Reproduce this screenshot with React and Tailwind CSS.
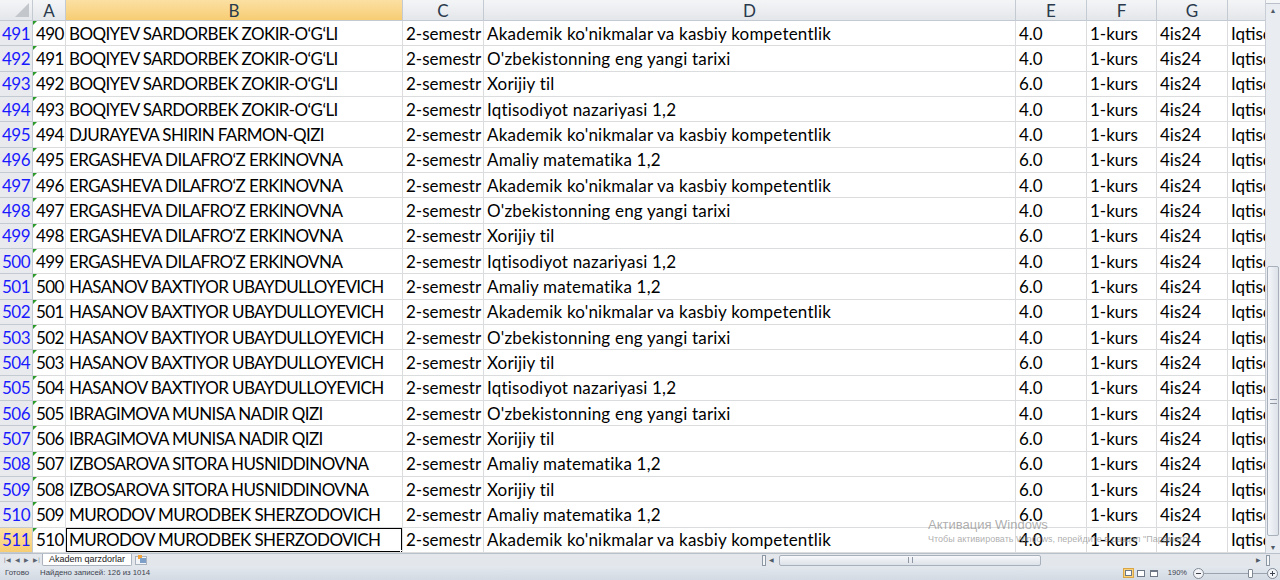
import React from "react";

const AK = "Akademik ko'nikmalar va kasbiy kompetentlik";
const UZ = "O'zbekistonning eng yangi tarixi";
const XT = "Xorijiy til";
const IQ = "Iqtisodiyot nazariyasi 1,2";
const AM = "Amaliy matematika 1,2";

const BOQ = "BOQIYEV SARDORBEK ZOKIR-O‘G‘LI";
const ERG = "ERGASHEVA DILAFRO‘Z ERKINOVNA";
const HAS = "HASANOV BAXTIYOR UBAYDULLOYEVICH";
const IBR = "IBRAGIMOVA MUNISA NADIR QIZI";
const IZB = "IZBOSAROVA SITORA HUSNIDDINOVNA";
const MUR = "MURODOV MURODBEK SHERZODOVICH";

const rows = [
  [BOQ, AK, "4.0"],
  [BOQ, UZ, "4.0"],
  [BOQ, XT, "6.0"],
  [BOQ, IQ, "4.0"],
  ["DJURAYEVA SHIRIN FARMON-QIZI", AK, "4.0"],
  [ERG, AM, "6.0"],
  [ERG, AK, "4.0"],
  [ERG, UZ, "4.0"],
  [ERG, XT, "6.0"],
  [ERG, IQ, "4.0"],
  [HAS, AM, "6.0"],
  [HAS, AK, "4.0"],
  [HAS, UZ, "4.0"],
  [HAS, XT, "6.0"],
  [HAS, IQ, "4.0"],
  [IBR, UZ, "4.0"],
  [IBR, XT, "6.0"],
  [IZB, AM, "6.0"],
  [IZB, XT, "6.0"],
  [MUR, AM, "6.0"],
  [MUR, AK, "4.0"],
];

const cell = "h-full shrink-0 border-r border-b border-[#dadcdd] px-[3px] flex items-center whitespace-nowrap overflow-hidden";
const hdr = "h-full shrink-0 border-r border-b border-[#c4cad2] flex items-center justify-center text-[#2a3a4c]";

function HeaderRow() {
  return (
    <div className="flex h-[21px] bg-gradient-to-b from-[#f4f5f7] to-[#e3e6ea]">
      <div className="relative w-[33px] h-full shrink-0 border-r border-b border-[#c4cad2]">
        <div className="absolute right-[3px] bottom-[3px] w-0 h-0 border-l-[14px] border-l-transparent border-b-[14px] border-b-[#c3c6cb]" />
      </div>
      <div className={hdr + " w-[33px]"}>A</div>
      <div className={hdr + " w-[337px] bg-gradient-to-b from-[#fbe0a3] to-[#f7cd73]"}>B</div>
      <div className={hdr + " w-[81px]"}>C</div>
      <div className={hdr + " w-[532px]"}>D</div>
      <div className={hdr + " w-[71px]"}>E</div>
      <div className={hdr + " w-[70px]"}>F</div>
      <div className={hdr + " w-[71px]"}>G</div>
      <div className={hdr + " flex-1 border-r-0"}></div>
    </div>
  );
}

function Row({ r, i }) {
  const num = 491 + i;
  const selected = num === 511;
  return (
    <div className="flex h-[25.33px]">
      <div
        className={
          "w-[33px] h-full shrink-0 border-r border-b border-[#c4cad2] flex items-center justify-center text-[#1a1aff] tracking-[-0.5px] " +
          (selected ? "bg-gradient-to-b from-[#fbe0a3] to-[#f7cd73]" : "bg-[#e8eaed]")
        }
      >
        {num}
      </div>
      <div className={cell + " w-[33px] relative tracking-[-0.6px]"}>
        <span className="absolute left-0 top-0 w-0 h-0 border-t-[4px] border-t-[#2a9a2a] border-r-[4px] border-r-transparent" />
        {num - 1}
      </div>
      <div className={cell + " w-[337px] relative tracking-[-0.6px]"}>
        {r[0]}
        {selected && (
          <>
            <div className="absolute -left-[1px] -top-[1px] -right-[1px] -bottom-[1px] border-2 border-black" />
            <div className="absolute -right-[3px] -bottom-[3px] w-[5px] h-[5px] bg-black border border-white" />
          </>
        )}
      </div>
      <div className={cell + " w-[81px]"}>2-semestr</div>
      <div className={cell + " w-[532px] tracking-[0.2px]"}>{r[1]}</div>
      <div className={cell + " w-[71px]"}>{r[2]}</div>
      <div className={cell + " w-[70px]"}>1-kurs</div>
      <div className={cell + " w-[71px]"}>4is24</div>
      <div className={cell + " flex-1 border-r-0"}>Iqtisodiyot</div>
    </div>
  );
}

function VScroll() {
  return (
    <div className="w-[15px] h-full shrink-0 flex flex-col bg-[#e9ecf0] border-l border-[#c9ced6]">
      <div className="h-[4px] border-b border-[#b9c0c9] bg-[#f4f6f8]" />
      <div className="h-[12px] flex items-center justify-center text-[7px] text-[#505a66]">▲</div>
      <div className="h-[250px]" />
      <div className="mx-[1px] h-[270px] rounded-[2px] border border-[#a8b0bb] bg-gradient-to-r from-[#f4f6f9] to-[#dde2e9] flex items-center justify-center">
        <div className="w-[7px] h-[5px] border-y border-[#8d96a2]" />
      </div>
      <div className="flex-1" />
      <div className="h-[12px] flex items-center justify-center text-[7px] text-[#505a66]">▼</div>
    </div>
  );
}

function TabStrip() {
  return (
    <div className="flex h-[13px] bg-[#e3e7ec] border-t border-[#b8c0ca] text-[9px] items-center">
      <div className="w-[42px] flex items-center justify-around text-[6px] text-[#5b6470] pl-[2px]">
        <span>|◀</span>
        <span>◀</span>
        <span>▶</span>
        <span>▶|</span>
      </div>
      <div className="h-full px-[6px] bg-white border-x border-b border-[#a9b2bd] flex items-center text-[#222] font-['Liberation_Sans'] -mt-[1px] rounded-b-[2px]">
        Akadem qarzdorlar
      </div>
      <div className="ml-[3px] w-[12px] h-[9px] border border-[#a9b2bd] bg-[#f2f4f7] relative">
        <span className="absolute -top-[2px] left-[2px] w-[4px] h-[4px] bg-[#f2a33a]" />
        <span className="absolute top-[1px] left-[4px] w-[6px] h-[5px] bg-[#7ea0c8]" />
      </div>
      <div className="flex-1" />
      <div className="w-[4px] h-[11px] border border-[#8e98a4] bg-[#f4f6f8] mr-[3px]" />
      <div className="w-[10px] text-[6px] text-[#505a66]">◀</div>
      <div className="w-[262px] h-[11px] rounded-[2px] border border-[#a8b0bb] bg-gradient-to-b from-[#f6f8fa] to-[#dde2e9] flex items-center justify-center">
        <div className="w-[5px] h-[6px] border-x border-[#8d96a2]" />
      </div>
      <div className="w-[215px]" />
      <div className="w-[10px] text-[6px] text-[#505a66]">▶</div>
      <div className="w-[4px] h-[11px] border border-[#8e98a4] bg-[#f4f6f8] mr-[10px]" />
    </div>
  );
}

function StatusBar() {
  return (
    <div className="flex h-[14px] items-center bg-gradient-to-b from-[#e3e8ee] to-[#d3dae3] text-[7.8px] text-[#3d4450] font-['Liberation_Sans']">
      <span className="ml-[5px]">Готово</span>
      <span className="ml-[11px]">Найдено записей: 126 из 1014</span>
      <div className="flex-1" />
      <div className="flex items-center gap-[2px]">
        <div className="w-[11px] h-[10px] bg-[#f9d27a] border border-[#d9a545] flex items-center justify-center">
          <div className="w-[7px] h-[6px] border border-[#6d7785] bg-white" />
        </div>
        <div className="w-[11px] h-[10px] flex items-center justify-center">
          <div className="w-[8px] h-[7px] border border-[#6d7785] bg-white" />
        </div>
        <div className="w-[11px] h-[10px] flex items-center justify-center">
          <div className="w-[8px] h-[7px] border border-[#6d7785] bg-white border-t-2" />
        </div>
      </div>
      <span className="ml-[8px] text-[7.5px]">190%</span>
      <div className="ml-[6px] w-[11px] h-[11px] rounded-full border border-[#7f8895] bg-[#f2f4f7] flex items-center justify-center">
        <div className="w-[5px] h-[1px] bg-[#3d4450]" />
      </div>
      <div className="relative w-[63px] h-[11px] flex items-center">
        <div className="w-full h-[1px] bg-[#9aa3ae]" />
        <div className="absolute left-[44px] top-[1px] w-[5px] h-[9px] rounded-[1px] border border-[#7f8895] bg-white" />
      </div>
      <div className="mr-[2px] w-[11px] h-[11px] rounded-full border border-[#7f8895] bg-[#f2f4f7] flex items-center justify-center relative">
        <div className="w-[5px] h-[1px] bg-[#3d4450]" />
        <div className="absolute w-[1px] h-[5px] bg-[#3d4450]" />
      </div>
    </div>
  );
}

export default function App() {
  return (
    <div className="w-[1280px] h-[580px] overflow-hidden bg-white relative font-['Lato'] text-[17px] text-black leading-none">
      <div className="flex h-[553px]">
        <div className="flex-1 overflow-hidden">
          <HeaderRow />
          {rows.map((r, i) => (
            <Row key={i} r={r} i={i} />
          ))}
        </div>
        <VScroll />
      </div>
      <TabStrip />
      <StatusBar />

      {/* windows activation watermark */}
      <div className="absolute left-[928px] top-[518px] pointer-events-none font-['Liberation_Sans'] text-[#8a8a8a]/70">
        <div className="text-[13px]">Активация Windows</div>
        <div className="text-[9px] mt-[4px] whitespace-nowrap">Чтобы активировать Windows, перейдите в раздел "Параметры".</div>
      </div>
    </div>
  );
}
